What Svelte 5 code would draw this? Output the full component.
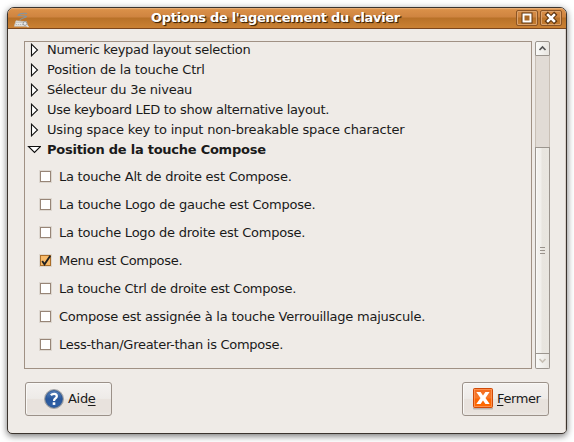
<script>
  const groups = [
    { text: 'Numeric keypad layout selection', ls: -0.32 },
    { text: 'Position de la touche Ctrl', ls: -0.2 },
    { text: 'Sélecteur du 3e niveau', ls: -0.25 },
    { text: 'Use keyboard LED to show alternative layout.', ls: -0.33 },
    { text: 'Using space key to input non-breakable space character', ls: -0.17 }
  ];
  const options = [
    { text: 'La touche Alt de droite est Compose.', on: false, ls: -0.24 },
    { text: 'La touche Logo de gauche est Compose.', on: false, ls: -0.22 },
    { text: 'La touche Logo de droite est Compose.', on: false, ls: -0.23 },
    { text: 'Menu est Compose.', on: true, ls: -0.32 },
    { text: 'La touche Ctrl de droite est Compose.', on: false, ls: -0.26 },
    { text: 'Compose est assignée à la touche Verrouillage majuscule.', on: false, ls: -0.23 },
    { text: 'Less-than/Greater-than is Compose.', on: false, ls: -0.28 }
  ];
</script>

<div class="desktop">
  <div class="window">
    <header>
      <svg class="app" width="17" height="17" viewBox="0 0 17 17">
        <path d="M14 2.500C10 2 6 3 5 4.300C7 5 12 4.500 13.500 5.500C13.500 7 7 6.500 7 9.500" fill="none" stroke="#8195a3" stroke-width="1.100" />
        <path d="M3 9.800L13.500 10.800L14.500 15.200H1.300Z" fill="#e9e8e3" stroke="#c3beb5" stroke-width=".8" />
        <path d="M3.500 11.500H11M2.800 13.500H12" stroke="#aaa" stroke-dasharray="1 1" />
        <circle cx="12" cy="12.500" r="1.900" fill="#e8e8e8" stroke="#888" stroke-width=".8" />
        <path d="M13.300 14L15.500 16" stroke="#ddd" stroke-width="1.500" />
      </svg>
      <h1>Options de l'agencement du clavier</h1>
      <div class="controls">
        <span class="ctl"><svg width="20" height="14" viewBox="0 0 20 14"><path d="M6.500 3.500H13.500V10.500H6.500Z" fill="none" stroke="#5d3410" stroke-width="4" /><path d="M6.500 3.500H13.500V10.500H6.500Z" fill="#a96826" stroke="#fff" stroke-width="2" /></svg></span>
        <span class="ctl"><svg width="20" height="14" viewBox="0 0 20 14"><path d="M6.800 3.800L13.200 10.200M13.200 3.800L6.800 10.200" stroke="#5d3410" stroke-width="4.600" stroke-linecap="square" /><path d="M7 4L13 10M13 4L7 10" stroke="#fff" stroke-width="2.500" stroke-linecap="square" /></svg></span>
      </div>
    </header>
    <main>
      <div class="body">
        <section class="list">
          {#each groups as g}
            <div class="group">
              <svg width="14" height="14" viewBox="0 0 14 14"><path d="M4.500 1.200V12.800L10.500 7Z" fill="#fff" stroke="#111" stroke-width="1.100" /></svg>
              <span style:letter-spacing="{g.ls}px">{g.text}</span>
            </div>
          {/each}
          <div class="group open">
            <svg width="14" height="14" viewBox="0 0 14 14"><path d="M1.500 3.500H13.500L7.500 9.500Z" fill="#fff" stroke="#111" stroke-width="1.100" /></svg>
            <span>Position de la touche Compose</span>
          </div>
          <div class="options">
            {#each options as o}
              <div class="option">
                <span class="box" class:on={o.on}>
                  {#if o.on}<svg width="13" height="13" viewBox="0 0 13 13"><path d="M3.200 7L5.500 10.300L11.300 1.800" fill="none" stroke="#222" stroke-width="1.900" /></svg>{/if}
                </span>
                <span style:letter-spacing="{o.ls}px">{o.text}</span>
              </div>
            {/each}
          </div>
        </section>
        <aside class="scroll">
          <div class="arrow up"><svg width="13" height="13" viewBox="0 0 13 13"><path d="M3.500 8L6.500 5L9.500 8" fill="none" stroke="#555" stroke-width="1.700" /></svg></div>
          <div class="trough"></div>
          <div class="thumb"><i></i><i></i><i></i></div>
          <div class="arrow down"><svg width="13" height="13" viewBox="0 0 13 13"><path d="M3.500 5L6.500 8L9.500 5" fill="none" stroke="#c6bfb4" stroke-width="1.700" /></svg></div>
        </aside>
      </div>
      <footer>
        <div class="button help">
          <svg width="22" height="22" viewBox="0 0 22 22">
            <defs><linearGradient id="b" x1="0" y1="0" x2="0" y2="1"><stop offset="0" stop-color="#5b84bb" /><stop offset=".5" stop-color="#28579c" /><stop offset="1" stop-color="#2d60a8" /></linearGradient></defs>
            <circle cx="11" cy="11" r="9.500" fill="#b4b5b6" stroke="#8c8f93" stroke-width=".7" />
            <circle cx="11" cy="11" r="8.400" fill="url(#b)" stroke="#264f8c" stroke-width=".8" />
            <path d="M7.900 7.200Q9 5.800 11.200 5.800Q13.800 5.800 13.800 8.200Q13.800 9.600 12.300 10.500Q11 11.300 11 13" fill="none" stroke="#fff" stroke-width="2.300" />
            <rect x="9.700" y="14.300" width="2.600" height="2.600" fill="#fff" />
          </svg>
          <span>Aid<u>e</u></span>
        </div>
        <div class="button close">
          <svg width="22" height="22" viewBox="0 0 22 22">
            <defs><linearGradient id="o" x1="0" y1="0" x2="0" y2="1"><stop offset="0" stop-color="#f36a1c" /><stop offset=".5" stop-color="#f77a2c" /><stop offset=".55" stop-color="#fb6300" /><stop offset="1" stop-color="#ff6a00" /></linearGradient></defs>
            <rect x="1" y="19.500" width="20" height="2" rx="1" fill="#b9b3ad" />
            <rect x="1.500" y=".5" width="19" height="19" rx="1" fill="url(#o)" stroke="#cf4a08" />
            <rect x="2.500" y="1.500" width="17" height="17" fill="none" stroke="#ff9a5c" stroke-width=".8" />
            <path d="M4.300 4H8.600L11 7.600L13.400 4H17.600L13.500 10L17.700 16H13.400L11 12.400L8.600 16H4.300L8.500 10Z" fill="#fff" />
          </svg>
          <span><u>F</u>ermer</span>
        </div>
      </footer>
    </main>
  </div>
</div>

<style>
  :global(body) { background: #fff; }
  .desktop { width: 574px; height: 442px; padding: 7px; box-sizing: border-box; overflow: hidden; font: 13px/20px "DejaVu Sans", sans-serif; color: #1a1a1a; }
  .window { width: 560px; height: 427px; box-sizing: border-box; border: 1px solid #3b342e; border-radius: 7px 7px 5px 5px; background: #efebe7; overflow: hidden; box-shadow: 0 2px 7px rgba(0, 0, 0, .55); display: flex; flex-direction: column; }
  header { height: 21px; box-sizing: border-box; flex: none; border-bottom: 1px solid #7b461d; background: linear-gradient(#e6a361 0, #d98f48 2px, #cf8440 9px, #b87128 10px, #c98033 19px); display: flex; align-items: center; padding: 0 4px 0 5px; box-shadow: inset 0 1px #e8ad74; }
  .app { flex: none; margin-top: 3px; }
  h1 { flex: 1; margin: 0 0 0 5px; text-align: center; font-size: 13px; line-height: 20px; letter-spacing: -.32px; color: #fff; text-shadow: 1px 1px 1px #432608, 1px 1px 0 #5a3510; white-space: nowrap; }
  .controls { display: flex; gap: 2px; }
  .ctl { width: 22px; height: 16px; box-sizing: border-box; border: 1px solid #8b5425; border-radius: 2px; box-shadow: inset 0 0 0 1px #dca36c; display: flex; }
  main { flex: 1; padding: 12px 15px 0 16px; border-right: 1px solid #d8cfc8; display: flex; flex-direction: column; }
  .body { display: flex; gap: 3px; height: 328px; }
  .list { flex: none; width: 508px; height: 328px; box-sizing: border-box; border: 1px solid #a09184; overflow: hidden; }
  .group { height: 20px; display: flex; align-items: center; gap: 6px; padding-left: 2px; white-space: nowrap; }
  .group:first-child { margin-top: -2px; }
  .group svg { flex: none; }
  .open { font-weight: bold; letter-spacing: -.25px; }
  .options { padding: 3px 0 0 15px; }
  .option { height: 28px; display: flex; align-items: center; gap: 8px; white-space: nowrap; }
  .box { width: 11px; height: 11px; margin-bottom: 1px; box-sizing: border-box; border: 1px solid #978577; background: #fff; box-shadow: 0 0 0 1px #ddd7d0; display: flex; }
  .box svg { flex: none; margin: -2px; }
  .box.on { background: #f8ba68; border-color: #ab6e2a; }
  .scroll { flex: none; width: 15px; height: 328px; display: flex; flex-direction: column; }
  .arrow { height: 15px; box-sizing: border-box; border: 1px solid #9b958e; background: linear-gradient(90deg, #fafaf8, #e8e5e0); display: flex; flex: none; }
  .up { border-radius: 2px 2px 0 0; }
  .down { border-radius: 0 0 2px 2px; border-top: 0; }
  .trough { height: 91px; background: #e1dbd5; border: solid #c8bfb5; border-width: 0 1px; }
  .thumb { flex: 1; border: 1px solid #9b958e; background: linear-gradient(90deg, #fff, #f4f3f0 1px, #f1efeb 5px, #e8e5df 6px, #e9e6e0); display: flex; flex-direction: column; align-items: center; justify-content: center; gap: 2px; }
  .thumb i { width: 5px; height: 1px; background: #99938c; }
  footer { display: flex; justify-content: space-between; padding: 13px 1px 0; }
  .button { width: 87px; height: 34px; box-sizing: border-box; border: 1px solid #9b9189; border-radius: 3px; background: linear-gradient(#f4f2f0, #eeebe8 48%, #e8e2dd 52%, #e8e2dd 90%, #ece8e4); box-shadow: inset 1px 1px #faf9f7; display: flex; align-items: center; gap: 3px; padding-left: 17px; }
  .help { letter-spacing: -.3px; }
  .close { padding-left: 9px; letter-spacing: -.4px; }
  u { text-underline-offset: 2px; text-decoration-thickness: 1px; text-decoration-skip-ink: none; }
</style>
